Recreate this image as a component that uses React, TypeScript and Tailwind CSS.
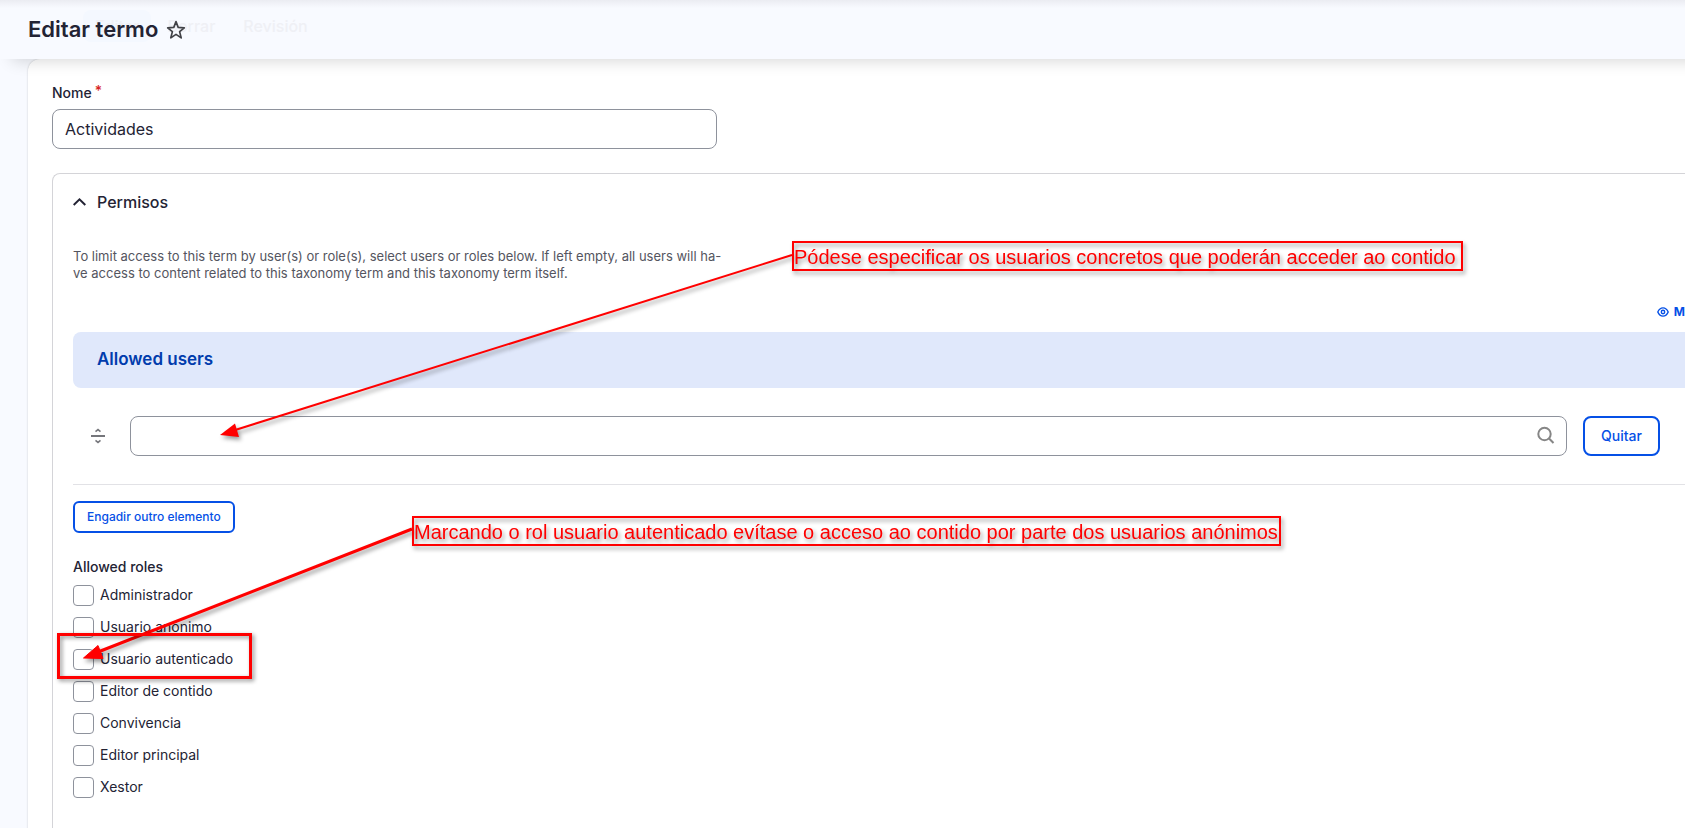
import React from "react";

const roles = [
  "Administrador",
  "Usuario anónimo",
  "Usuario autenticado",
  "Editor de contido",
  "Convivencia",
  "Editor principal",
  "Xestor",
];

function Star() {
  return (
    <svg width="20" height="20" viewBox="0 0 20 20" fill="none" stroke="#414247" strokeWidth="1.7" strokeLinejoin="round" aria-hidden="true">
      <path d="M10 1.6 12.2 7.4 18.3 7.8 13.6 11.6 15.2 17.9 10 14.4 4.8 17.9 6.4 11.6 1.7 7.8 7.8 7.4Z" />
    </svg>
  );
}

function DragHandle() {
  return (
    <svg width="16" height="16" viewBox="0 0 16 16" fill="none" stroke="#75767b" aria-hidden="true">
      <path d="M1 8h14" strokeWidth="2" />
      <path d="M5.5 3.6 8 1.6l2.5 2M5.5 12.4 8 14.4l2.5-2" strokeWidth="1.6" />
    </svg>
  );
}

function Header() {
  return (
    <header className="relative z-10 -mr-8 flex h-[59px] items-center bg-[#f8faff] pl-7 shadow-[0_14px_16px_-12px_rgba(0,0,0,0.16)]">
      <div className="absolute inset-x-0 top-0 h-2 bg-linear-to-b from-[#ebecf2] to-transparent" />
      <nav className="absolute left-[83px] top-[10px] flex h-8 items-center text-base font-medium text-[#eff0f5]">
        <a href="#editar" className="rounded-lg bg-[#f4f8ff] px-3 py-1">Editar</a>
        <a href="#borrar" className="ml-4">Borrar</a>
        <a href="#revision" className="ml-7">Revisión</a>
      </nav>
      <div className="relative flex items-center gap-2">
        <h1 className="text-[22px] font-semibold">Editar termo</h1>
        <button type="button" aria-label="★">
          <Star />
        </button>
      </div>
    </header>
  );
}

function Annotations() {
  return (
    <>
      <svg className="pointer-events-none absolute left-0 top-0 z-20 drop-shadow-[2px_3px_2px_rgba(0,0,0,0.4)]" width="800" height="680" viewBox="0 0 800 680" fill="#ff0000" stroke="#ff0000" aria-hidden="true">
        <path d="M792 255 232 431" strokeWidth="2" />
        <path d="M220 435 235 423.500 239 437Z" stroke="none" />
        <path d="M412 529 98 652" strokeWidth="3" />
        <path d="M83.500 658 98 645.500 103 658.500Z" strokeWidth="1" strokeLinejoin="round" />
      </svg>
      <div className="pointer-events-none absolute left-[57px] top-[633px] z-20 h-[46px] w-[195px] border-3 border-[#ff0000] drop-shadow-[2px_2px_2px_rgba(0,0,0,0.45)]" />
      <p className="absolute left-[792px] top-[241px] z-20 h-[30px] w-[671px] whitespace-nowrap border-2 border-[#ff0000] font-['Liberation_Sans',sans-serif] text-xl leading-7 text-[#ff0000] drop-shadow-[2px_3px_2px_rgba(0,0,0,0.4)]">
        Pódese especificar os usuarios concretos que poderán acceder ao contido
      </p>
      <p className="absolute left-[412px] top-[516px] z-20 h-[30px] w-[869px] whitespace-nowrap border-2 border-[#ff0000] font-['Liberation_Sans',sans-serif] text-xl leading-7 text-[#ff0000] drop-shadow-[2px_3px_2px_rgba(0,0,0,0.4)]">
        Marcando o rol usuario autenticado evítase o acceso ao contido por parte dos usuarios anónimos
      </p>
    </>
  );
}

export default function App() {
  return (
    <div className="relative h-screen overflow-hidden bg-[#f8faff] font-[Inter,sans-serif] text-[#232334]">
      <Header />
      <main className="ml-7 rounded-tl-xl bg-white pb-12 pl-6 pt-6 shadow-[0_0_2px_rgba(0,0,0,0.22)]">
        <form>
          <div className="flex flex-col">
            <label htmlFor="nome" className="flex h-5 items-center text-sm font-medium">
              Nome<span className="-mt-1 ml-[3px] text-[#d72222]">*</span>
            </label>
            <input id="nome" defaultValue="Actividades" className="mt-[6px] h-10 w-full max-w-[665px] rounded-lg border border-[#8e929c] bg-white px-3 text-base outline-none" />
          </div>

          <details open className="mt-6 rounded-l-lg border border-r-0 border-[#d4d4d8] pb-9 pl-5">
            <summary className="flex h-14 cursor-pointer list-none items-center gap-[11px] text-base font-medium">
              <svg width="13" height="14" viewBox="0 0 13 14" fill="none" stroke="#232334" strokeWidth="2" aria-hidden="true">
                <path d="M.7 10 6.500 4.300 12.300 10" />
              </svg>
              Permisos
            </summary>
            <p className="mt-[18px] text-[13px] leading-[17px] text-[#545560]">
              To limit access to this term by user(s) or role(s), select users or roles below. If left empty, all users will ha-
              <br />
              ve access to content related to this taxonomy term and this taxonomy term itself.
            </p>

            <div className="mt-5 flex h-5 justify-end overflow-hidden">
              <button type="button" className="flex items-center gap-[5px] text-xs font-bold text-[#0550e6]">
                <svg width="12" height="10" viewBox="0 0 12 10" fill="none" stroke="#0550e6" strokeWidth="1.4" aria-hidden="true">
                  <path d="M.8 5C2 2.200 3.800 .9 6 .9S10 2.200 11.200 5C10 7.800 8.200 9.100 6 9.100S2 7.800 .8 5Z" />
                  <circle cx="6" cy="5" r="1.700" />
                </svg>
                M
              </button>
            </div>

            <table className="mt-[10px] w-full border-collapse">
              <thead>
                <tr>
                  <th colSpan={3} className="h-14 rounded-l-lg bg-[#e0e8fb] pl-6 text-left text-[17px] font-semibold text-[#003cad]">
                    Allowed users
                  </th>
                </tr>
              </thead>
              <tbody>
                <tr className="border-b border-[#e2e2e6]">
                  <td className="w-[57px] pl-[17px]"><DragHandle /></td>
                  <td className="h-24">
                    <div className="relative">
                      <input aria-label="Allowed users" className="block h-10 w-full rounded-lg border border-[#8e929c] bg-white pl-4 pr-12 outline-none" />
                      <svg className="absolute right-3 top-[10px]" width="18" height="18" viewBox="0 0 18 18" fill="none" stroke="#868686" strokeWidth="2" aria-hidden="true">
                        <circle cx="7.500" cy="8" r="6.200" />
                        <path d="m11.800 12.300 4.700 4.700" />
                      </svg>
                    </div>
                  </td>
                  <td className="w-[118px] pl-4">
                    <button type="button" className="h-10 w-[77px] rounded-lg border-2 border-[#0550e6] text-sm font-medium text-[#0550e6]">Quitar</button>
                  </td>
                </tr>
              </tbody>
            </table>

            <button type="button" className="mt-4 block h-8 rounded-md border-2 border-[#0550e6] px-3 text-xs font-medium text-[#0550e6]">
              Engadir outro elemento
            </button>

            <fieldset className="mt-6">
              <legend className="mb-2 text-sm font-medium leading-5">Allowed roles</legend>
              <div className="flex flex-col gap-[11px]">
                {roles.map((role) => (
                  <label key={role} className="flex h-[21px] items-center gap-[6px] text-sm">
                    <input type="checkbox" className="size-[21px] appearance-none rounded-sm border border-[#8e929c] bg-white" />
                    {role}
                  </label>
                ))}
              </div>
            </fieldset>
          </details>
        </form>
      </main>
      <Annotations />
    </div>
  );
}
